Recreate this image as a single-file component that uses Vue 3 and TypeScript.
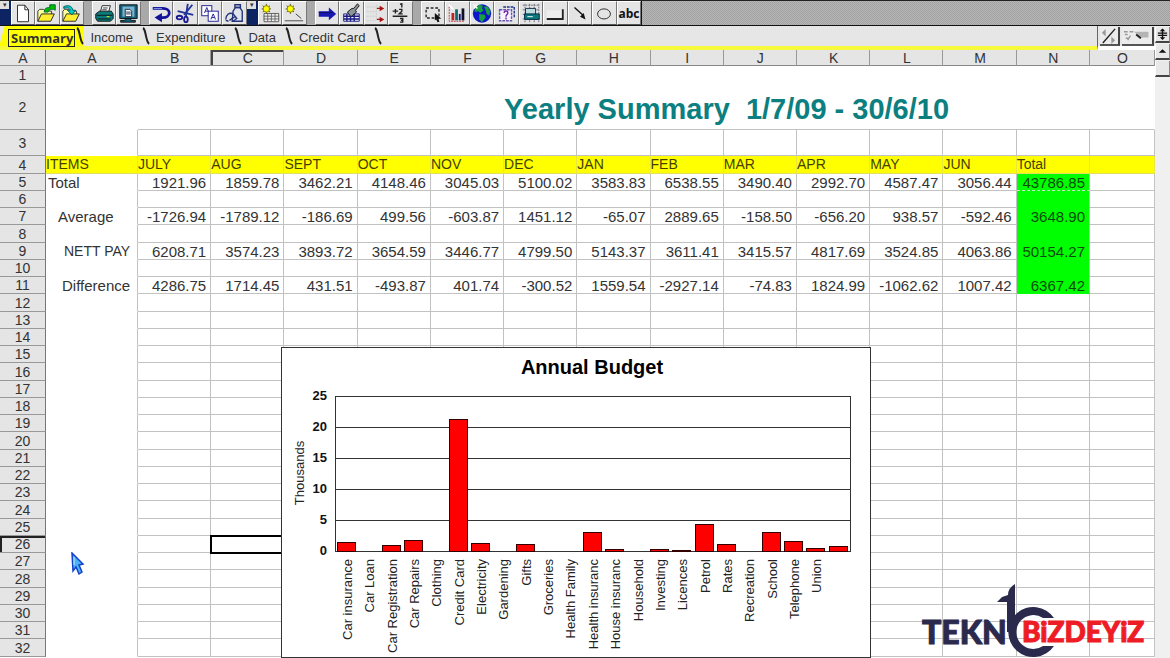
<script setup lang="ts">
interface Tool { name: string; art: string }
interface Group { lead: 'grip' | 'gap'; tools: Tool[] }
interface Bar { label: string; value: number }

const star = '<path d="M4 4l8 7M12 4l-8 7M8 2v11M3 7.500h10" stroke="#4a4a00" stroke-width="1"/><circle cx="8" cy="7.500" r="3.500" fill="#ff0" stroke="#8a8000"/>'
const folder = '<path d="M2 21V10l2-2h4l2 2h7v3" fill="#ffff9c" stroke="#333"/><path d="M2 21l4-8h14l-4 8z" fill="#ffee30" stroke="#222"/>'

const groups: Group[] = [
  { lead: 'grip', tools: [
    { name: 'New', art: '<path d="M6 3.500h8l4 5v13H6z" fill="#fff" stroke="#222"/><path d="M14 3.500v5h4" fill="none" stroke="#222"/>' },
    { name: 'Open', art: folder + '<path d="M9 11c0-4 2-5 6-5V3h6v6l-2-1c-3 0-5 0-6 3z" fill="#0b0" stroke="#063"/>' },
    { name: 'Save', art: folder + '<path d="M3 5c5-2 9-1 10 4h3l-4 5-5-5h3c-1-3-3-3-7-2z" fill="#0cc" stroke="#055"/>' }
  ] },
  { lead: 'gap', tools: [
    { name: 'Print', art: '<path d="M8 11l2-7h9l-2 7" fill="#fff" stroke="#222"/><path d="M11 6.500h5M10 8.500h5" stroke="#333"/><path d="M3 13l4-3h13l2 3v5l-3 3H5l-2-3z" fill="#0a7a7a" stroke="#111"/><path d="M4 14.500h17M5 18.500h14" stroke="#111"/><path d="M15 16h3" stroke="#ff0"/>' },
    { name: 'Print Preview', art: '<path d="M3 3h19v15H3z" fill="#13607c" stroke="#111"/><rect x="6" y="5" width="13" height="11" fill="#7bb4d0"/><path d="M9 8h5l2 2v6H9z" fill="#fff" stroke="#123"/><path d="M10 11h5M10 13h5" stroke="#124"/><path d="M9 18h6v2h5v2H4v-2h5z" fill="#13607c" stroke="#111"/>' }
  ] },
  { lead: 'gap', tools: [
    { name: 'Undo', art: '<path d="M3 7h11c4 0 7 2 7 5s-3 5-7 5h-2" fill="none" stroke="#111199" stroke-width="3"/><path d="M13 12v10l-8-5z" fill="#111199"/><path d="M4 7h9" stroke="#88a8f0"/>' },
    { name: 'Cut', art: '<path d="M20 3l-9 11M4 10l17 4" stroke="#223399" stroke-width="2"/><path d="M15 2l-2 14" stroke="#223399" stroke-width="2"/><ellipse cx="6" cy="17" rx="3" ry="2" fill="none" stroke="#1a1a90" stroke-width="2"/><ellipse cx="13" cy="19" rx="2" ry="3" fill="none" stroke="#1a1a90" stroke-width="2"/>' },
    { name: 'Copy', art: '<rect x="3" y="4" width="11" height="11" fill="#fff" stroke="#1a1a90"/><path d="M6 12l2.500-6 2.500 6M7 10h3" fill="none" stroke="#1a1a90"/><rect x="10" y="10" width="11" height="11" fill="#fff" stroke="#1a1a90"/><path d="M13 19l2.500-6 2.500 6M14 17h3" fill="none" stroke="#1a1a90"/>' },
    { name: 'Paste', art: '<path d="M11 10l2-3V3h6v4l2 3v11H10z" fill="#dfe3ee" stroke="#223377" stroke-width="1.500"/><path d="M13 6h6" stroke="#223377" stroke-width="2"/><path d="M3 19c0-5 4-8 8-6l4 5-4 3M7 20l6-4M3 20l3 1" fill="none" stroke="#223377" stroke-width="1.500"/>' }
  ] },
  { lead: 'grip', tools: [
    { name: 'New Sheet', art: star + '<path d="M5.500 12.500h16v9h-16z" fill="#eee" stroke="#555"/><path d="M5 15.500h17M5 18.500h17M9.500 12v9M13.500 12v9M17.500 12v9" stroke="#666"/>' },
    { name: 'New Object', art: star + '<path d="M14 13l6 5" stroke="#333"/><path d="M2 20.500h20" stroke="#444"/>' }
  ] },
  { lead: 'gap', tools: [
    { name: 'Go To', art: '<path d="M3 10h11V6l8 7-8 7v-4H3z" fill="#1818b0"/><path d="M3 11.500h15" stroke="#101060"/>' },
    { name: 'Format Painter', art: '<path d="M4 13h17v8H4z" fill="#eef" stroke="#1a1a80"/><path d="M4 15.500h17M4 18.500h17M7.500 13v8M11.500 13v8M15.500 13v8" stroke="#1a1a80" stroke-width="1.500"/><path d="M19 2l2 2-4 5 1 2-6 5-4-5 5-4h2z" fill="#8a9499" stroke="#111"/>' },
    { name: 'Rows', art: '<path d="M2 5.500h10M2 10.500h10M2 15.500h10M2 20.500h10M12.500 3v18" stroke="#ccc" stroke-dasharray="2 1"/><path d="M13 7h5M13 19h5" stroke="#a11" stroke-width="1.500"/><path d="M16 4l5 3-5 3zM16 16l5 3-5 3z" fill="#a11"/>' },
    { name: 'Sum', art: '<path d="M12 2.500l2-.5v4M4 10h6M7 7.500v5M11 8h3v2l-3 3h4M4 15.500h16M12 18h3v4h-3M13 20h2" fill="none" stroke="#222" stroke-width="1.500"/>' }
  ] },
  { lead: 'gap', tools: [
    { name: 'Select', art: '<path d="M4.500 6.500h14v11h-14z" fill="none" stroke="#222" stroke-width="1.500" stroke-dasharray="3 2"/><path d="M14 12l7 6-3 .500 1 3-2 .500-1.500-3-1.500 1z" fill="#111"/>' },
    { name: 'Chart', art: '<path d="M3.500 5v16h17" fill="none" stroke="#b33" stroke-dasharray="2 1"/><path d="M6 12h3v8H6z" fill="#b22"/><path d="M10 8h3v12h-3z" fill="#0a6a70"/><path d="M14 13h2v7h-2z" fill="#118"/><path d="M17 7h3v13h-3z" fill="#112"/><path d="M3 3l5 5" stroke="#fff" stroke-width="2"/>' },
    { name: 'Map', art: '<circle cx="12" cy="12.500" r="10" fill="#0d16c8"/><path d="M4 7l5-4 4 1-1 3 2 2-4 3-2-2-4 1zM14 5l4 0 3 5-1 5-3-2-1-4zM9 13l6 1 1 3-4 5-3-3z" fill="#16a040"/><path d="M3 3l4 4M7 3L3 7" stroke="#fff" stroke-width="1.500"/>' },
    { name: 'Query', art: '<path d="M5 8.500h13v12H5z" fill="#f4f4ff" stroke="#6a55b0" stroke-dasharray="3 1" stroke-width="1.500"/><path d="M9 5.500h12v12" fill="none" stroke="#223388" stroke-dasharray="3 1" stroke-width="1.500"/><path d="M10 12c0-3 4-3 4 0 0 2-2 1-2 4M12 17v2" fill="none" stroke="#7722aa" stroke-width="1.500"/>' },
    { name: 'Picture', art: '<path d="M3 3.500h18M3 8.500h18M3 13.500h18M3 18.500h18M5.500 2v20M10.500 2v20M15.500 2v20M20.500 2v20" stroke="#667" stroke-dasharray="2 1"/><path d="M6 7h11v7H6z" fill="#bdd" stroke="#124"/><path d="M5 13h16v6H5z" fill="#0a7a7a" stroke="#024"/><path d="M8 16h6" stroke="#fff"/>' },
    { name: 'Button', art: '<path d="M3 9h17v9H3z" fill="#eee"/><path d="M3 18.500h17.500V8" fill="none" stroke="#222" stroke-width="2"/>' },
    { name: 'Line', art: '<path d="M6 6l10 9" stroke="#111" stroke-width="1.500"/><path d="M18 19l-6-3 4-4z" fill="#111"/>' },
    { name: 'Ellipse', art: '<ellipse cx="12" cy="13" rx="7" ry="5.500" fill="none" stroke="#222"/>' },
    { name: 'abc', art: '' }
  ] }
]

const tabs: string[] = ['Summary', 'Income', 'Expenditure', 'Data', 'Credit Card']
const letters: string[] = 'ABCDEFGHIJKLMNO'.split('')

const headings = ['ITEMS', 'JULY', 'AUG', 'SEPT', 'OCT', 'NOV', 'DEC', 'JAN', 'FEB', 'MAR', 'APR', 'MAY', 'JUN', 'Total', '']
const cells: Record<number, string[]> = {
  4: headings,
  5: ['Total', '1921.96', '1859.78', '3462.21', '4148.46', '3045.03', '5100.02', '3583.83', '6538.55', '3490.40', '2992.70', '4587.47', '3056.44', '43786.85'],
  7: ['Average', '-1726.94', '-1789.12', '-186.69', '499.56', '-603.87', '1451.12', '-65.07', '2889.65', '-158.50', '-656.20', '938.57', '-592.46', '3648.90'],
  9: ['NETT PAY', '6208.71', '3574.23', '3893.72', '3654.59', '3446.77', '4799.50', '5143.37', '3611.41', '3415.57', '4817.69', '3524.85', '4063.86', '50154.27'],
  11: ['Difference', '4286.75', '1714.45', '431.51', '-493.87', '401.74', '-300.52', '1559.54', '-2927.14', '-74.83', '1824.99', '-1062.62', '1007.42', '6367.42']
}
const bodyRows: number[] = Array.from({ length: 30 }, (_, i) => i + 3)

function cellClass(row: number, col: number): Record<string, boolean> {
  return {
    label: col === 0,
    heading: row === 4,
    ['item-' + row]: col === 0,
    total: col === 13 && row >= 5 && row <= 11,
    marked: col === 13 && row === 5,
    active: col === 2 && row === 26
  }
}

const bars: Bar[] = [
  { label: 'Car insurance', value: 1.5 }, { label: 'Car Loan', value: 0 }, { label: 'Car Registration', value: 0.9 },
  { label: 'Car Repairs', value: 1.8 }, { label: 'Clothing', value: 0 }, { label: 'Credit Card', value: 21.3 },
  { label: 'Electricity', value: 1.3 }, { label: 'Gardening', value: 0 }, { label: 'Gifts', value: 1.2 },
  { label: 'Groceries', value: 0 }, { label: 'Health Family', value: 0 }, { label: 'Health insuranc', value: 3.1 },
  { label: 'House insuranc', value: 0.3 }, { label: 'Household', value: 0 }, { label: 'Investing', value: 0.3 },
  { label: 'Licences', value: 0.15 }, { label: 'Petrol', value: 4.3 }, { label: 'Rates', value: 1.1 },
  { label: 'Recreation', value: 0 }, { label: 'School', value: 3.1 }, { label: 'Telephone', value: 1.6 },
  { label: 'Union', value: 0.5 }, { label: '', value: 0.8 }
]
const ticks: number[] = [0, 5, 10, 15, 20, 25]
const yOf = (v: number): number => Math.round(204 - v * 6.2)
const xOf = (i: number): number => Math.round(56 + (i * 514) / 23)
</script>

<template>
  <main class="app">
    <div class="toolbar" role="toolbar" aria-label="Tools">
      <template v-for="(g, gi) in groups" :key="gi">
        <span :class="g.lead"><i v-if="g.lead === 'grip'">▾</i></span>
        <div class="group">
          <button v-for="t in g.tools" :key="t.name" type="button" class="tool" :aria-label="t.name">
            <svg v-if="t.art" viewBox="0 0 24 24" aria-hidden="true" v-html="t.art"></svg>
            <b v-else>abc</b>
          </button>
        </div>
      </template>
    </div>

    <div class="workspace">
      <div class="document">
        <div class="tab-row">
          <nav class="tabs" aria-label="Sheets">
            <button v-for="(t, i) in tabs" :key="t" type="button" class="tab" :class="{ current: i === 0 }">
              <span>{{ t }}</span>
              <svg class="edge" viewBox="0 0 8 20" aria-hidden="true"><path d="M1 2c2 1 2 4 3 8s1 6 3 8" /></svg>
            </button>
          </nav>
          <button type="button" class="corner narrow" aria-label="Scroll tabs">
            <svg viewBox="0 0 18 18" aria-hidden="true"><path d="M3 17L16 2" stroke="#222" stroke-width="1.500" /><path d="M2 6l4-4v8zM16 14l-4-4v8z" fill="#999" /></svg>
          </button>
          <button type="button" class="corner wide" aria-label="Sheet options">
            <svg viewBox="0 0 30 18" aria-hidden="true"><path d="M2 5h4M8 5h4M3 8h3M4 12h3M9 9l-3 5" stroke="#999" stroke-width="1.500" /><path d="M13 5h15v6H19z" fill="#b4b4b4" /><path d="M15 8l5 4" stroke="#222" stroke-width="2" /></svg>
          </button>
        </div>

        <div class="sheet">
          <table>
            <colgroup>
              <col class="c-num"><col class="c-a"><col v-for="n in 13" :key="n"><col class="c-last">
            </colgroup>
            <thead>
              <tr>
                <th class="num">A</th>
                <th v-for="l in letters" :key="l" scope="col" :class="{ picked: l === 'C' }">{{ l }}</th>
              </tr>
            </thead>
            <tbody>
              <tr class="row-1"><th class="num" scope="row">1</th><td colspan="15" class="plain"></td></tr>
              <tr class="row-2">
                <th class="num" scope="row">2</th>
                <td class="plain"></td>
                <td colspan="5" class="plain ruled"></td>
                <td colspan="9" class="plain ruled title">Yearly Summary&nbsp; 1/7/09 - 30/6/10</td>
              </tr>
              <tr v-for="r in bodyRows" :key="r" :class="'row-' + r">
                <th class="num" scope="row" :class="{ picked: r === 26 }">{{ r }}</th>
                <td v-for="(l, c) in letters" :key="l" :class="cellClass(r, c)">{{ cells[r]?.[c] ?? '' }}</td>
              </tr>
            </tbody>
          </table>

          <svg class="chart" width="590" height="311" viewBox="0 0 590 311" role="img" aria-label="Annual Budget">
            <rect class="frame" x="0.500" y="0.500" width="589" height="310" />
            <text class="chart-title" x="311" y="27" text-anchor="middle">Annual Budget</text>
            <text class="axis-name" transform="translate(23 126) rotate(-90)" text-anchor="middle">Thousands</text>
            <g v-for="t in ticks" :key="t">
              <line class="rule" x1="54" x2="570" :y1="yOf(t) + 0.5" :y2="yOf(t) + 0.5" />
              <text class="tick" x="46" :y="yOf(t) + 4" text-anchor="end">{{ t }}</text>
            </g>
            <path class="rule" d="M54.500 49v156M569.500 49v156" />
            <g v-for="(b, i) in bars" :key="i">
              <rect v-if="b.value" class="bar" :x="xOf(i) + 0.5" :y="yOf(b.value) + 0.5" width="18" :height="204 - yOf(b.value)" />
              <text class="bar-label" :transform="`translate(${xOf(i) + 15} 212) rotate(-90)`" text-anchor="end">{{ b.label }}</text>
            </g>
          </svg>

          <svg class="pointer" width="15" height="24" viewBox="0 0 15 24" aria-hidden="true">
            <path d="M1 1l11 11-4 1 3 7-3 2-3-7-3 4z" fill="#48b4f8" stroke="#1640c8" stroke-width="1.500" /><path d="M3 5v8" stroke="#c8f0ff" />
          </svg>

          <svg class="brand" width="230" height="76" viewBox="0 0 230 76" role="img" aria-label="TEKNO BiZDEYiZ">
            <path class="navy" d="M77 18l5-5 6-2q0-7 7-11v48h-8V18z" />
            <path class="navy" d="M134 34A25 25 0 1 0 134 62H123A17 17 0 1 1 123 34z" />
            <text class="brand-a" x="2" y="60">TEKN</text>
            <text class="brand-b" x="102" y="58">BiZDEYiZ</text>
          </svg>
        </div>
      </div>

      <div class="scroller">
        <button type="button" aria-label="Split"><svg viewBox="0 0 14 14"><path d="M2 6h10M2 8.500h10M7 2v10" stroke="#111" stroke-width="1.500" /><path d="M4 4l3-3 3 3zM4 10.500l3 3 3-3z" fill="#111" /></svg></button>
        <button type="button" aria-label="Scroll up"><svg viewBox="0 0 14 14"><path d="M3 9l4-4 4 4z" fill="#111" /></svg></button>
        <button type="button" aria-label="Scroll thumb"></button>
      </div>
    </div>
  </main>
</template>

<style>
body { margin: 0; overflow: hidden; background: #fff; }
</style>

<style scoped>
.app { min-height: 100vh; display: flex; flex-direction: column; font-family: "Liberation Sans", Arial, sans-serif; color: #333; background: #fff; }
button { font: inherit; color: inherit; margin: 0; padding: 0; border: 0; border-radius: 0; box-sizing: border-box; }
.toolbar { display: flex; height: 26px; box-sizing: border-box; border-top: 1px solid #222; border-bottom: 1px solid #111; background: repeating-conic-gradient(#a2a2a2 0 25%, #b6b6b6 0 50%) 0 0 / 2px 2px; }
.group { display: flex; }
.grip { width: 11px; background: #0c2462; }
.grip i { display: block; width: 9px; height: 8px; background: #e0e0e0; font-size: 7px; line-height: 8px; text-align: center; font-style: normal; }
.gap { width: 8px; background: #a9a9a9; }
.tool { width: 24px; height: 24px; background: #e4e4e4; border: 1px solid; border-color: #fff #777 #555 #fff; }
.tool:nth-child(even) { width: 25px; }
.group:last-child { border-right: 1px solid #111; }
.tool svg { display: block; width: 22px; height: 22px; }
.tool b { display: block; font-family: "Open Sans", "Liberation Sans", sans-serif; font-size: 12px; line-height: 21px; color: #111; }

.workspace { flex: 1; display: grid; grid-template-columns: minmax(0, 1fr) 15px; }
.tab-row { display: flex; height: 20px; background: #e6e6e6; gap: 2px; padding-right: 1px; }
.tabs { flex: 1; display: flex; border-right: 1px solid #666; height: 24px; box-sizing: border-box; border-bottom: 4px solid #f8f83c; margin-bottom: -4px; }
.tab { display: flex; height: 20px; background: none; font-size: 13px; line-height: 24px; padding-left: 6px; }
.tab span { padding: 0 9px 0 0; }
.tab.current { background: linear-gradient(105deg, #e6e6e6 4px, #ff0 5px); padding-left: 8px; }
.tab.current span { height: 16px; margin: 3px 1px 0 0; padding: 0 1px 0 2px; border: 1px solid #222; font-family: "Open Sans", "Liberation Sans", sans-serif; font-size: 13px; line-height: 16px; font-weight: 700; }
.edge { width: 8px; height: 20px; fill: none; stroke: #222; stroke-width: 2; }
.corner { height: 19px; margin-top: 1px; background: #ececec; border-right: 2px solid #444; border-bottom: 2px solid #555; }
.corner svg { display: block; height: 17px; }
.narrow { width: 20px; }
.wide { width: 32px; }

.sheet { position: relative; margin-top: 4px; }
table { width: 100%; table-layout: fixed; border-collapse: separate; border-spacing: 0; }
.c-num { width: 46px; }
.c-a { width: 92px; }
.c-last { width: 65px; }
tr { height: 17px; }
thead tr { height: 16px; }
tr:nth-child(4n) { height: 18px; }
.row-1 { height: 18px; }
.row-2 { height: 46px; }
.row-3 { height: 26px; }
th, td { padding: 0; box-sizing: border-box; line-height: 15px; white-space: nowrap; }
th { background: #e5e5e5; font-size: 14px; font-weight: 400; color: #333; border-right: 1px solid #999; border-bottom: 1px solid #888; }
thead th { padding: 1px 0 0 1px; line-height: 14px; }
th.num { border-right: 1px solid #777; border-bottom-color: #999; }
tbody th.num { padding-top: 1px; }
thead th.picked { box-shadow: inset 2px 2px #444; }
tbody th.picked { box-shadow: inset 2px 2px #222; }
td { font-size: 15px; text-align: right; padding-right: 4px; border-right: 1px solid #c2c2c2; border-bottom: 1px solid #c2c2c2; }
td.plain { border-color: transparent; }
td.ruled { border-bottom-color: #c2c2c2; }
td.title { text-align: left; font-size: 29px; line-height: 36px; padding: 5px 0 0; font-weight: 700; color: #0c8080; }
td.label { text-align: left; padding: 0 0 0 2px; border-bottom-color: transparent; }
td.heading { background: #ff0; text-align: left; padding: 0; font-size: 14px; color: #443f00; border-color: #e8e840; border-bottom-color: #e0e060; }
td.item-7 { padding-left: 12px; }
td.item-9 { padding-left: 18px; font-size: 14px; }
td.item-11 { padding-left: 16px; }
td.total { background: #0f0; color: #0a4a0a; border-bottom-color: #0f0; }
td.marked { border-bottom: 1px dashed #c8e8c8; }
td.active { outline: 2px solid #000; outline-offset: -1px; }

.chart { position: absolute; left: 281px; top: 297px; display: block; }
.frame { fill: #fff; stroke: #333; }
.rule { stroke: #333; fill: none; }
.bar { fill: #f00; stroke: #300; }
.chart-title { font-size: 20px; font-weight: 700; fill: #000; }
.tick { font-size: 13px; font-weight: 700; fill: #111; }
.axis-name, .bar-label { font-size: 13px; fill: #222; }
.pointer { position: absolute; left: 71px; top: 502px; }
.brand { position: absolute; right: 5px; top: 534px; }
.brand text { font-family: Lato, "Open Sans", sans-serif; font-weight: 900; stroke-width: 1; }
.navy, .brand-a { fill: #2b2a4c; }
.brand-a { font-size: 32px; stroke: #2b2a4c; }
.brand-b { font-size: 28px; fill: #ee1c25; stroke: #ee1c25; }

.scroller { display: flex; flex-direction: column; gap: 1px; padding-top: 1px; background: #f0f0f0; }
.scroller button { height: 16px; background: #e8e8e8; border-bottom: 2px solid #444; border-left: 1px solid #fff; border-right: 1px solid #888; }
.scroller svg { display: block; width: 13px; height: 14px; }
</style>
